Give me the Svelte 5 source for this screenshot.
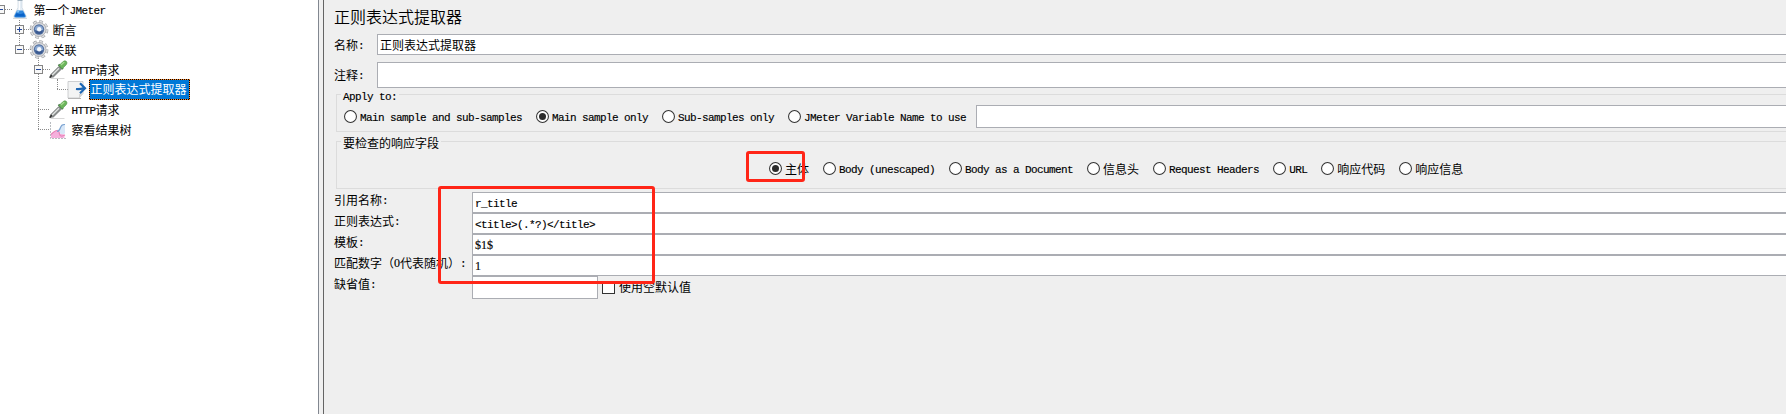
<script>
  const tree = [
    { label: '第一个JMeter', depth: 0, icon: 'flask', box: 'minus', guides: [] },
    { label: '断言', depth: 1, icon: 'gear', box: 'plus', guides: [[19, 0, 20]] },
    { label: '关联', depth: 1, icon: 'gear', box: 'minus', guides: [[19, 0, 10], [38, 18, 20]] },
    { label: 'HTTP请求', depth: 2, icon: 'dropper', box: 'minus', guides: [[38, 0, 20], [57, 19, 20]] },
    { label: '正则表达式提取器', depth: 3, icon: 'extract', selected: true, guides: [[38, 0, 20], [57, 0, 10]] },
    { label: 'HTTP请求', depth: 2, icon: 'dropper', guides: [[38, 0, 20]] },
    { label: '察看结果树', depth: 2, icon: 'chart', guides: [[38, 0, 10]] }
  ];
  const applyTo = ['Main sample and sub-samples', 'Main sample only', 'Sub-samples only', 'JMeter Variable Name to use'];
  const fields = ['主体', 'Body (unescaped)', 'Body as a Document', '信息头', 'Request Headers', 'URL', '响应代码', '响应信息'];
  const rows = [
    ['引用名称:', 'r_title'],
    ['正则表达式:', '<title>(.*?)</title>'],
    ['模板:', '$1$'],
    ['匹配数字（0代表随机）:', '1']
  ];
  const runs = (s) => s.match(/[\x20-\x7e]+|[^\x20-\x7e]+/g) ?? [];
  const isLatin = (s) => s.charCodeAt(0) < 127;
  const isDigits = (s) => /^[$0-9]+$/.test(s);
</script>

{#snippet mixed(s)}{#each runs(s) as r}<span class:latin={isLatin(r)} class:digits={isDigits(r)}>{r}</span>{/each}{/snippet}

{#snippet radio(label, on)}
  <span class="radio">
    <svg width="13" height="13" viewBox="0 0 13 13">
      <circle cx="6.5" cy="6.5" r="5.95" fill="#fff" stroke="#333" stroke-width="1.05" />
      {#if on}<circle cx="6.5" cy="6.5" r="3.5" fill="#2b2b2b" />{/if}
    </svg>
    <span class="text">{@render mixed(label)}</span>
  </span>
{/snippet}

{#snippet icon(kind)}
  {#if kind === 'flask'}
    <path d="M8 .5h4v7l4 8.3q1 2.2-1.500 2.2h-9q-2.500 0-1.500-2.200l4-8.300z" fill="#e4edf5" stroke="#c3d0db" stroke-width=".6" />
    <path d="M7 10.500h6l2.700 5.200q.5 1.700-1.500 1.700H5.800q-2 0-1.500-1.700z" fill="#2f86dc" />
    <path d="M6.600 13q3.500 2 7 0l1.400 3.400H5z" fill="#0a62c8" />
    <path d="M7.800 10h2l-1 2.500H6.600z" fill="#88c4f5" />
    <path d="M9.300 1v9" stroke="#fff" stroke-width="1.200" />
    <path d="M7.500.5h5" stroke="#9fb0bd" />
    <path d="M3 18.500h14" stroke="#d6d9dd" />
  {:else if kind === 'gear'}
    <circle cx="10" cy="9.500" r="8" fill="none" stroke="#96999d" stroke-width="2.700" stroke-dasharray="3.600 2.683" />
    <circle cx="10" cy="9.500" r="7.800" fill="none" stroke="#dedfe1" stroke-width="2.100" stroke-dasharray="2.900 3.226" stroke-dashoffset="-.3" />
    <circle cx="10" cy="9.500" r="7" fill="#d9dadd" stroke="#a2a4a8" stroke-width=".7" />
    <circle cx="10" cy="9.500" r="5.200" fill="#53709f" />
    <circle cx="10" cy="9.500" r="4.100" fill="#8ba9d3" />
    <path d="M6 10a4 4 0 0 0 8 0q-4 2-8 0z" fill="#3b5a91" />
    <circle cx="10.200" cy="9.300" r="2.200" fill="#f4f8fd" />
  {:else if kind === 'dropper'}
    <path d="M2.500 18.500h14" stroke="#d8d8d8" />
    <path d="M1.800 17.500l1-3 8-8 2.700 2.600-8 7.800z" fill="#8b8e8e" stroke="#6a6e6e" stroke-width=".7" />
    <path d="M4 15.200l7-7" stroke="#e3e6e5" stroke-width="1.300" />
    <path d="M1.800 17.600l2-2.600" stroke="#333" stroke-width="1.500" />
    <path d="M10.500 4.500l4.500 4.500" stroke="#4d7a4c" stroke-width="2" />
    <path d="M11 5.600l4-4q2-1.600 3.400-.2t-.2 3.400l-4 4z" fill="#6cb55c" stroke="#4a9145" stroke-width=".6" />
    <path d="M13 5l3.300-3" stroke="#a8da94" stroke-width="1.200" />
  {:else if kind === 'extract'}
    <path d="M1 1.500h15v12l-4 4.500H1z" fill="#f3f4f4" stroke="#c1c4c6" stroke-width=".8" />
    <path d="M1 18.500h13" stroke="#b5b5b5" />
    <path d="M16 13.500l-4 4.500v-4z" fill="#d4d4d4" />
    <path d="M9 9q4 .5 8-1" stroke="#1b66b5" stroke-width="2.200" fill="none" />
    <path d="M13 3.200l5 5-5 5" stroke="#1b66b5" stroke-width="2.200" fill="none" />
  {:else}
    <path d="M2.500 2v16.500H18" stroke="#b9bcc0" fill="none" stroke-dasharray="2 1" />
    <path d="M3 18v-4q3-3 5.500-3.500 2 1 3 3l5 1v3.500z" fill="#f5b0dc" />
    <path d="M9 10q3-1 4-3.500t4-2v9q-4 1.500-5.500-.5T9 10z" fill="#d8e7f7" />
    <path d="M3 14.500q4-4 6-4t2.500 3.500 5.500 1" fill="none" stroke="#e884b8" stroke-width="1.200" />
    <path d="M9 11.500q2.500-.5 3.500-4t4.500-3" fill="none" stroke="#7ba3d2" stroke-width="1.100" />
  {/if}
{/snippet}

<div class="app">
  <nav class="tree">
    {#each tree as n}
      {@const tx = 34 + n.depth * 19}
      {@const cx = n.depth * 19}
      <div class="node">
        <svg width={tx - 1} height="20">
          <g stroke="#8a8a8a" stroke-dasharray="1 1" shape-rendering="crispEdges">
            {#each n.guides as g}<line x1={g[0] + 0.5} x2={g[0] + 0.5} y1={g[1]} y2={g[2]} />{/each}
            <line x1={cx + (n.box ? 5 : 0)} x2={cx + 12} y1="9.500" y2="9.500" />
          </g>
          {#if n.box}
            <rect x={cx - 3.5} y="5.500" width="8" height="8" fill="#f8f8f8" stroke="#858585" />
            <path d="M{cx - 2} 9.500h5" stroke="#24489b" />
            {#if n.box === 'plus'}<path d="M{cx + 0.5} 7v5" stroke="#24489b" />{/if}
          {/if}
          <g transform="translate({tx - 24} 0)">{@render icon(n.icon)}</g>
        </svg>
        <span class="label" class:selected={n.selected}>{@render mixed(n.label)}</span>
      </div>
    {/each}
  </nav>
  <div class="splitter"></div>

  <main>
    <h1>正则表达式提取器</h1>
    <div class="line name"><span class="cap">{@render mixed('名称:')}</span><div class="field">正则表达式提取器</div></div>
    <div class="line comment"><span class="cap">{@render mixed('注释:')}</span><div class="field"></div></div>

    <section class="group apply">
      <div class="legend"><span>{@render mixed('Apply to:')}</span></div>
      <div class="options">
        {#each applyTo as o, i}{@render radio(o, i === 1)}{/each}
        <div class="field variable"></div>
      </div>
    </section>

    <section class="group check">
      <div class="legend"><span>要检查的响应字段</span></div>
      <div class="options response">
        {#each fields as o, i}{@render radio(o, i === 0)}{/each}
      </div>
      <div class="mark first"></div>
    </section>

    <div class="form">
      {#each rows as [k, v]}
        <div class="row"><span class="key">{@render mixed(k)}</span><div class="field">{@render mixed(v)}</div></div>
      {/each}
      <div class="row last">
        <span class="key">{@render mixed('缺省值:')}</span>
        <div class="field short"></div>
        <span class="checkbox"></span><span class="empty">使用空默认值</span>
      </div>
      <div class="mark second"></div>
    </div>
  </main>
</div>

<style>
  :global(body) { background: #efefef; overflow: hidden; }
  .app {
    display: flex;
    width: 1786px;
    height: 414px;
    overflow: hidden;
    font: 12px/20px "Noto Sans CJK SC", sans-serif;
    color: #000;
    white-space: nowrap;
  }
  .latin {
    position: relative;
    top: -1px;
    font-family: "Liberation Mono", monospace;
    font-size: 11px;
    letter-spacing: -0.6px;
    line-height: 1;
    white-space: pre;
    -webkit-text-stroke: 0.15px currentColor;
  }
  .digits { font-family: "Liberation Serif", serif; font-size: 12px; letter-spacing: 0; }
  .tree { width: 318px; flex: none; background: #fff; }
  .node { display: flex; height: 20px; }
  .node svg { flex: none; }
  .label { height: 20px; line-height: 20px; padding-left: 0.5px; }
  .selected {
    box-sizing: border-box;
    margin: -1px 0 0 -1px;
    width: 101px;
    height: 21px;
    line-height: 18px;
    background: linear-gradient(#0078d7, #0078d7) padding-box, #000 border-box;
    color: #fff;
    border: 1px dotted #ff8728;
  }
  .splitter { box-sizing: border-box; width: 6px; flex: none; background: #f0f0f0; border-left: 1px solid #828790; border-right: 1px solid #646464; }
  main { flex: 1; min-width: 0; padding-left: 10px; background: #efefef; }
  h1 { margin: 0; height: 34px; font-size: 16px; font-weight: 350; line-height: 33px; }
  .line { display: flex; }
  .name { height: 21px; margin-bottom: 7px; line-height: 22px; }
  .comment { height: 26px; line-height: 26px; }
  .cap { width: 43px; flex: none; }
  .field {
    box-sizing: border-box;
    flex: 1;
    min-width: 0;
    background: #fff;
    border: 1px solid #abadb3;
    border-right: 0;
    padding-left: 2px;
    line-height: 20px;
  }
  .group { box-sizing: border-box; position: relative; margin-left: 2px; border: 1px solid #dcdcdc; border-right: 0; }
  .apply { height: 38px; margin-top: 6px; }
  .check { height: 48px; margin-top: 9px; }
  .legend { display: flex; height: 10px; padding-left: 4px; }
  .legend > span { height: 18px; line-height: 18px; margin-top: -8px; padding: 0 2px; background: #efefef; }
  .apply .legend > span { height: 12px; line-height: 12px; margin-top: -5px; }
  .options { display: flex; padding-left: 7px; height: 23px; }
  .response { padding: 5px 0 0 432px; }
  .radio { display: flex; flex: none; align-items: center; margin-right: 14px; height: 23px; }
  .radio svg { margin-right: 3px; }
  .text { line-height: 23px; }
  .variable { margin-left: -4px; height: 23px; }
  .check .legend > span { height: 15px; line-height: 12px; margin-top: -5px; }
  .form { position: relative; padding-top: 3px; }
  .row { display: flex; height: 21px; }
  .key { width: 138px; flex: none; line-height: 15px; }
  .row .field { line-height: 19px; }
  .row.last { height: 23px; }
  .row .short { flex: none; width: 126px; border-right: 1px solid #abadb3; }
  .checkbox { box-sizing: border-box; width: 13px; height: 13px; margin: 5px 4px 0 4px; border: 1px solid #333; background: #fff; }
  .empty { line-height: 22px; }
  .mark { position: absolute; box-sizing: border-box; border: 3px solid #ff2517; border-radius: 3px; }
  .first { left: 409px; top: 9px; width: 59px; height: 31px; }
  .second { left: 104px; top: -3px; width: 217px; height: 98px; }
</style>
